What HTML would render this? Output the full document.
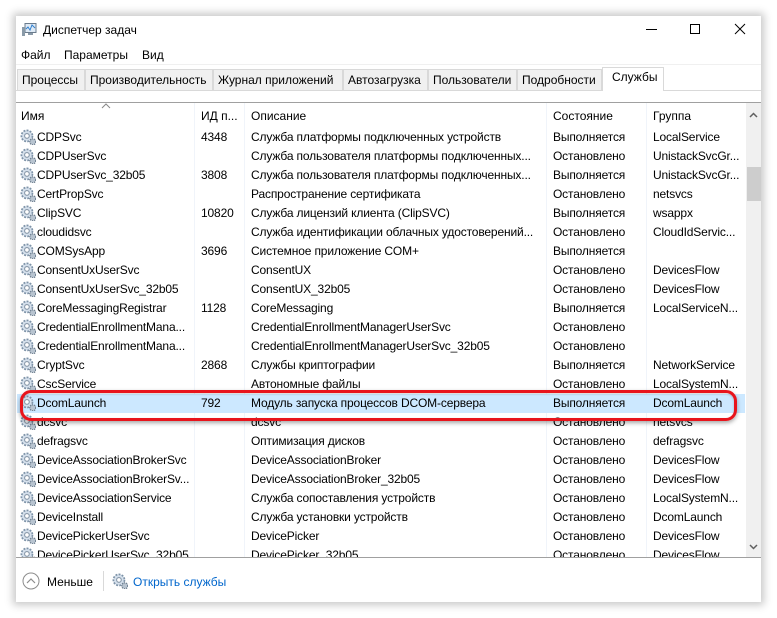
<!DOCTYPE html>
<html><head><meta charset="utf-8"><style>
*{margin:0;padding:0;box-sizing:border-box}
body{width:777px;height:618px;background:#fff;position:relative;overflow:hidden;font-family:"Liberation Sans",sans-serif;font-size:12px;color:#000}
.win{position:absolute;left:16px;top:16px;width:745px;height:586px;background:#fff;box-shadow:0 0 8px 3px rgba(0,0,0,.22)}
.abs{position:absolute;white-space:nowrap}
.tab{position:absolute;top:53px;height:21px;background:#f0f0f0;border:1px solid #d9d9d9;border-bottom:none;padding:3px 0 0 4px;font-size:12px}
.row{position:absolute;left:1px;width:728px;height:19px;letter-spacing:-0.15px}
.row span{position:absolute;top:3px;white-space:nowrap}
.g{position:absolute;left:3px;top:2px;width:16px;height:16px}
.c1{left:20px}.c2{left:184px}.c3{left:234px}.c4{left:536px}.c5{left:636px}
.sep{position:absolute;top:87px;width:1px;height:454px;background:#f0f4fa}
</style></head><body>
<div class="win">
 <svg class="abs" style="left:6px;top:7px" width="15" height="13" viewBox="0 0 15 13"><rect x="3" y="0.5" width="11" height="9" fill="#dfeaf5" stroke="#6a7b8c"/><polyline points="4,6 6,4 8,7 10,2 13,5" fill="none" stroke="#2f7fcf" stroke-width="1"/><rect x="0" y="4" width="3" height="9" fill="#8a9aa8"/><rect x="6" y="10" width="5" height="2" fill="#8a9aa8"/></svg>
 <div class="abs" style="left:27px;top:7px;font-size:12px">Диспетчер задач</div>
 <div class="abs" style="left:630px;top:13px;width:11px;height:1px;background:#000"></div>
 <div class="abs" style="left:674px;top:8px;width:10px;height:10px;border:1px solid #000"></div>
 <svg class="abs" style="left:718px;top:7px" width="12" height="12"><path d="M1 1L11 11M11 1L1 11" stroke="#000" stroke-width="1"/></svg>
 <div class="abs" style="left:5px;top:32px">Файл</div>
 <div class="abs" style="left:48px;top:32px">Параметры</div>
 <div class="abs" style="left:126px;top:32px">Вид</div>
 <div class="abs" style="left:0;top:48px;width:745px;height:1px;background:#f0f0f0"></div>
 <div class="tab" style="left:1px;width:68px">Процессы</div>
 <div class="tab" style="left:69px;width:128px">Производительность</div>
 <div class="tab" style="left:197px;width:130px">Журнал приложений</div>
 <div class="tab" style="left:327px;width:85px">Автозагрузка</div>
 <div class="tab" style="left:412px;width:89px">Пользователи</div>
 <div class="tab" style="left:501px;width:85px">Подробности</div>
 <div class="tab" style="left:586px;top:51px;width:62px;height:24px;background:#fff;padding-top:2px;padding-left:9px;z-index:2">Службы</div>
 <div class="abs" style="left:0;top:74px;width:745px;height:1px;background:#d9d9d9"></div>
 <div class="abs" style="left:0;top:86px;width:745px;height:1px;background:#a0a0a0"></div>
 <svg class="abs" style="left:85px;top:87px" width="10" height="6"><path d="M1 5L5 1L9 5" fill="none" stroke="#888"/></svg>
 <div class="abs" style="left:5px;top:93px">Имя</div>
 <div class="abs" style="left:185px;top:93px">ИД п...</div>
 <div class="abs" style="left:235px;top:93px">Описание</div>
 <div class="abs" style="left:537px;top:93px">Состояние</div>
 <div class="abs" style="left:637px;top:93px">Группа</div>
 <div class="abs" style="left:178px;top:87px;width:1px;height:20px;background:#e5e5e5"></div>
 <div class="abs" style="left:228px;top:87px;width:1px;height:20px;background:#e5e5e5"></div>
 <div class="abs" style="left:530px;top:87px;width:1px;height:20px;background:#e5e5e5"></div>
 <div class="abs" style="left:630px;top:87px;width:1px;height:20px;background:#e5e5e5"></div>
 <div class="sep" style="left:178px"></div><div class="sep" style="left:228px"></div><div class="sep" style="left:530px"></div><div class="sep" style="left:630px"></div>
 <div class="abs" style="left:730px;top:87px;width:15px;height:454px;background:#f0f0f0"></div>
 <svg class="abs" style="left:733px;top:96px" width="9" height="6"><path d="M1 5L4.5 1.5L8 5" fill="none" stroke="#606060" stroke-width="1.5"/></svg>
 <div class="abs" style="left:731px;top:151px;width:14px;height:34px;background:#cdcdcd"></div>
 <svg class="abs" style="left:733px;top:528px" width="9" height="6"><path d="M1 1L4.5 4.5L8 1" fill="none" stroke="#606060" stroke-width="1.5"/></svg>
 <svg width="0" height="0" style="position:absolute"><defs><g id="gear"><circle cx="6.5" cy="6.5" r="5.2" fill="#d5e0ec" stroke="#7e93a8" stroke-width="1.6" stroke-dasharray="1.8 1.2"/><circle cx="6.5" cy="6.5" r="2.2" fill="#fff" stroke="#8797a8"/><circle cx="12" cy="12" r="2.8" fill="#b8c4d0" stroke="#6f7f90" stroke-width="1.2" stroke-dasharray="1.2 0.8"/></g></defs></svg>
 <div class="abs" style="left:0;top:110px;width:730px;height:431px;overflow:hidden">
 <div class="row" style="top:268px;background:#cce8ff"></div>
 <div id="rows"></div>
 </div>
 <div class="abs" style="left:4px;top:374px;width:717px;height:31px;border:3px solid #e8141c;border-radius:11px;box-shadow:0 2px 4px rgba(0,0,0,.35),inset 0 1px 2px rgba(0,0,0,.2)"></div>
 <div class="abs" style="left:0;top:541px;width:745px;height:1px;background:#a0a0a0"></div>
 <svg class="abs" style="left:6px;top:556px" width="18" height="18"><circle cx="9" cy="9" r="8" fill="none" stroke="#8c8c8c"/><path d="M5 11L9 7L13 11" fill="none" stroke="#8c8c8c" stroke-width="1.2"/></svg>
 <div class="abs" style="left:31px;top:559px">Меньше</div>
 <div class="abs" style="left:87px;top:555px;width:1px;height:20px;background:#d9d9d9"></div>
 <svg class="abs" style="left:96px;top:557px" width="16" height="16" viewBox="0 0 15 15"><use href="#gear"/></svg>
 <div class="abs" style="left:117px;top:559px;color:#0066cc">Открыть службы</div>
</div>
<script>
const d=[["CDPSvc","4348","Служба платформы подключенных устройств","Выполняется","LocalService"],
["CDPUserSvc","","Служба пользователя платформы подключенных...","Остановлено","UnistackSvcGr..."],
["CDPUserSvc_32b05","3808","Служба пользователя платформы подключенных...","Выполняется","UnistackSvcGr..."],
["CertPropSvc","","Распространение сертификата","Остановлено","netsvcs"],
["ClipSVC","10820","Служба лицензий клиента (ClipSVC)","Выполняется","wsappx"],
["cloudidsvc","","Служба идентификации облачных удостоверений...","Остановлено","CloudIdServic..."],
["COMSysApp","3696","Системное приложение COM+","Выполняется",""],
["ConsentUxUserSvc","","ConsentUX","Остановлено","DevicesFlow"],
["ConsentUxUserSvc_32b05","","ConsentUX_32b05","Остановлено","DevicesFlow"],
["CoreMessagingRegistrar","1128","CoreMessaging","Выполняется","LocalServiceN..."],
["CredentialEnrollmentMana...","","CredentialEnrollmentManagerUserSvc","Остановлено",""],
["CredentialEnrollmentMana...","","CredentialEnrollmentManagerUserSvc_32b05","Остановлено",""],
["CryptSvc","2868","Службы криптографии","Выполняется","NetworkService"],
["CscService","","Автономные файлы","Остановлено","LocalSystemN..."],
["DcomLaunch","792","Модуль запуска процессов DCOM-сервера","Выполняется","DcomLaunch"],
["dcsvc","","dcsvc","Остановлено","netsvcs"],
["defragsvc","","Оптимизация дисков","Остановлено","defragsvc"],
["DeviceAssociationBrokerSvc","","DeviceAssociationBroker","Остановлено","DevicesFlow"],
["DeviceAssociationBrokerSv...","","DeviceAssociationBroker_32b05","Остановлено","DevicesFlow"],
["DeviceAssociationService","","Служба сопоставления устройств","Остановлено","LocalSystemN..."],
["DeviceInstall","","Служба установки устройств","Остановлено","DcomLaunch"],
["DevicePickerUserSvc","","DevicePicker","Остановлено","DevicesFlow"],
["DevicePickerUserSvc_32b05","","DevicePicker_32b05","Остановлено","DevicesFlow"]];
let h="";d.forEach((r,i)=>{h+=`<div class="row" style="top:${1+i*19}px"><svg class="g" viewBox="0 0 15 15"><use href="#gear"/></svg><span class="c1">${r[0]}</span><span class="c2">${r[1]}</span><span class="c3">${r[2]}</span><span class="c4">${r[3]}</span><span class="c5">${r[4]}</span></div>`});
document.getElementById("rows").innerHTML=h;
</script>
</body></html>
